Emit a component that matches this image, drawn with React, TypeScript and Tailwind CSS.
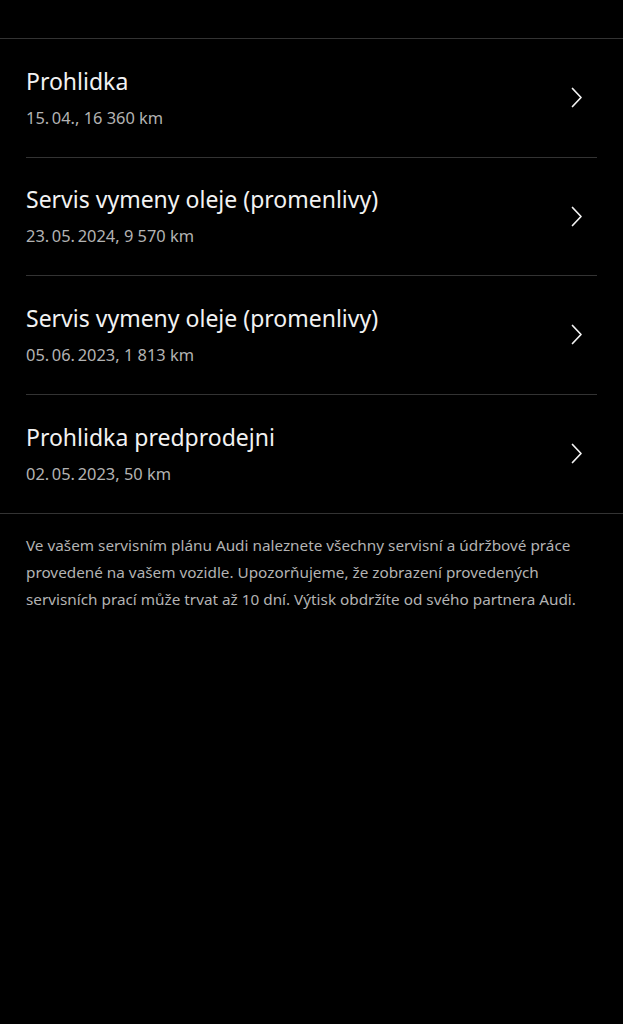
const items = [
  { title: "Prohlidka", sub: "15.\u200904., 16 360 km" },
  { title: "Servis vymeny oleje (promenlivy)", sub: "23.\u200905.\u20092024, 9 570 km" },
  { title: "Servis vymeny oleje (promenlivy)", sub: "05.\u200906.\u20092023, 1 813 km" },
  { title: "Prohlidka predprodejni", sub: "02.\u200905.\u20092023, 50 km" },
];

function Chevron() {
  return (
    <svg width="12" height="21" viewBox="0 0 12 21" fill="none" className="mr-[14px] shrink-0">
      <polyline points="1.5,1.5 10,10.5 1.5,19.5" stroke="#f2f2f2" strokeWidth="1.7" strokeLinecap="round" strokeLinejoin="round" />
    </svg>
  );
}

export default function App() {
  return (
    <main className="min-h-screen bg-black pt-[38px] text-white" style={{ fontFamily: '"Noto Sans", sans-serif' }}>
      <div className="border-t border-[#333]">
        {items.map((it, i) => (
          <div key={i} className="px-[26px]">
            <div
              className={
                "flex h-[118.5px] items-center justify-between" +
                (i < items.length - 1 ? " border-b border-[#333]" : "")
              }
            >
              <div className="flex flex-col pb-[1px]">
                <span className="text-[23px] leading-[30px] text-[#f2f2f2]">{it.title}</span>
                <span className="mt-[11px] text-[16.4px] leading-[22px] text-[#b3b3b3]">{it.sub}</span>
              </div>
              <Chevron />
            </div>
          </div>
        ))}
      </div>
      <div className="border-t border-[#333] px-[26px] pt-[18px]">
        <p className="text-[15.3px] leading-[27px] text-[#b3b3b3]">
          Ve vašem servisním plánu Audi naleznete všechny servisní a údržbové práce provedené na vašem vozidle.
          Upozorňujeme, že zobrazení provedených servisních prací může trvat až 10 dní. Výtisk obdržíte od svého
          partnera Audi.
        </p>
      </div>
    </main>
  );
}
